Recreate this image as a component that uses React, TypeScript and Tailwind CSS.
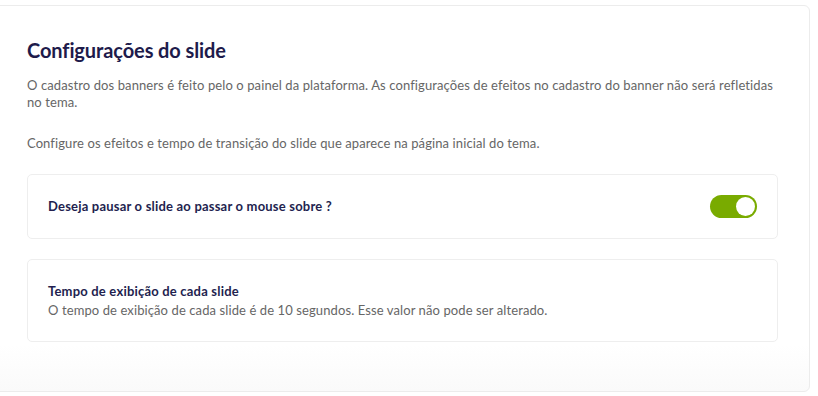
import React from "react";

export default function App() {
  return (
    <div className="w-[818px] h-[396px] bg-white overflow-hidden relative" style={{ fontFamily: "Lato, 'Noto Sans', sans-serif" }}>
      <div className="absolute left-[-20px] top-[5px] w-[830px] h-[387px] rounded-[6px] border border-[#ececec] bg-gradient-to-b from-white from-[88%] to-[#fafafa] pl-[46px] pr-[31px] pt-[32px]">
        <h1 className="text-[20px] leading-[24px] font-bold text-[#1e1b4b] tracking-[-0.1px]">Configurações do slide</h1>
        <p className="mt-[15px] text-[13px] leading-[17px] tracking-[0.1px] text-[#666666]">
          O cadastro dos banners é feito pelo o painel da plataforma. As configurações de efeitos no cadastro do banner não será refletidas no tema.
        </p>
        <p className="mt-[24px] text-[13px] leading-[17px] tracking-[0.1px] text-[#666666]">
          Configure os efeitos e tempo de transição do slide que aparece na página inicial do tema.
        </p>
        <div className="mt-[22px] h-[65px] rounded-[5px] border border-[#eeeeee] bg-white flex items-center justify-between pl-[20px] pr-[20px]">
          <span className="text-[13px] font-bold tracking-[0.2px] text-[#231f4f]">Deseja pausar o slide ao passar o mouse sobre ?</span>
          <div className="w-[47px] h-[23px] rounded-full bg-[#79ab00] flex items-center justify-end pr-[2px]">
            <div className="w-[19px] h-[19px] rounded-full bg-white" />
          </div>
        </div>
        <div className="mt-[20px] h-[83px] rounded-[5px] border border-[#eeeeee] bg-white flex flex-col justify-center pl-[20px] pr-[20px]">
          <span className="text-[13px] leading-[19px] font-bold tracking-[0.2px] text-[#231f4f]">Tempo de exibição de cada slide</span>
          <span className="text-[13px] leading-[19px] tracking-[0.1px] text-[#666666]">O tempo de exibição de cada slide é de 10 segundos. Esse valor não pode ser alterado.</span>
        </div>
      </div>
    </div>
  );
}
